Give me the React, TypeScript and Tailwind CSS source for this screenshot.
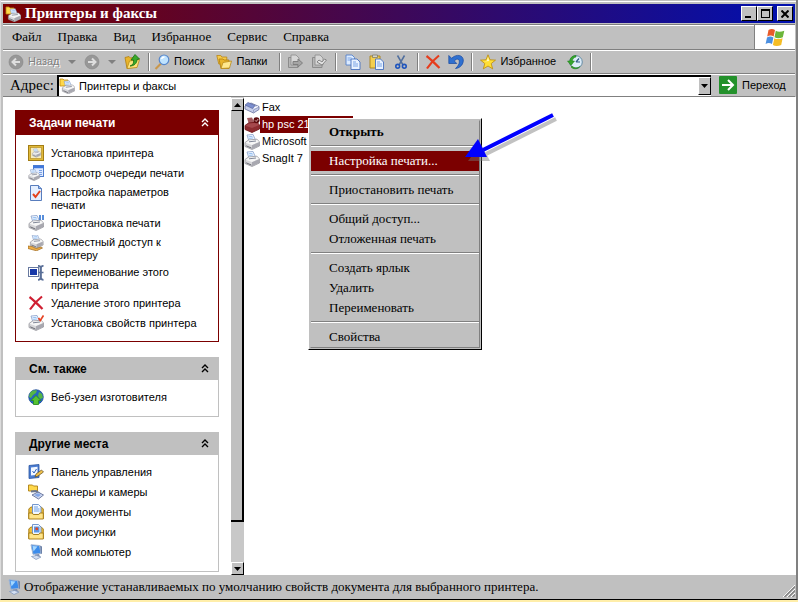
import React from 'react';

type IconProps = { className?: string };

const Svg = ({ children, className = '' }: { children: React.ReactNode; className?: string }) => (
  <svg viewBox="0 0 16 16" className={`h-4 w-4 shrink-0 ${className}`} aria-hidden="true">
    {children}
  </svg>
);

const PrinterShape = () => (
  <>
    <path d="M3 1l6-.6L11.500 6 5 7.500z" fill="#eef5ff" stroke="#7d97c4" strokeWidth=".7" />
    <path d="M4.500 2.800l4-.5M5.200 4.500l4-.6" stroke="#7fb2ee" strokeWidth=".8" />
    <path d="M1 8.500L4.500 6l8.500-.8L15.500 8v4L8 15.500 1 12.500z" fill="#d6d6d9" stroke="#8c8c93" strokeWidth=".7" />
    <path d="M1.500 8.700L5 6.500l8-.8 2 2.300-7 3z" fill="#f6f6f6" />
    <path d="M8 11.200l7-2.900V12l-7 3.200z" fill="#a8a8b0" />
    <path d="M2.200 11.800l5.300 2.300" stroke="#6a6b74" />
    <path d="M5 7.800l7-.8" stroke="#747a8c" strokeWidth=".9" />
  </>
);

const Printer = ({ className }: IconProps) => (
  <Svg className={className}>
    <PrinterShape />
  </Svg>
);

const PrinterFolder = ({ className }: IconProps) => (
  <Svg className={className}>
    <path d="M1 1h3l1 1h4v6H1z" fill="#ffd84a" stroke="#c08a10" strokeWidth=".8" />
    <g transform="translate(2.500 2.500) scale(.86)">
      <PrinterShape />
    </g>
  </Svg>
);

const PrinterSelected = () => (
  <Svg>
    <path d="M3 1l5-.6L10.500 6 5 7.500z" fill="#a35a5e" />
    <path d="M1 8.500L4.500 6l8.500-.8L15.500 8v4L8 15.500 1 12.500z" fill="#8d2c30" stroke="#6d1115" strokeWidth=".8" />
    <path d="M1.500 8.700L5 6.500l8-.8 2 2.300-7 3z" fill="#a5484c" />
    <circle cx="12.500" cy="3.300" r="3" fill="#5c0a0c" />
    <path d="M11 3.300l1.200 1.200 2-2.500" stroke="#d9b0b0" fill="none" />
  </Svg>
);

const Fax = () => (
  <Svg>
    <path d="M1 6l6-3 8 3.500v3L9.500 13 1 9z" fill="#c5cdea" stroke="#66709c" strokeWidth=".8" />
    <path d="M1 5l3-2.500 7 3-2.500 3z" fill="#7c8fd0" stroke="#4d5a94" strokeWidth=".6" />
    <path d="M10 8l4-1.500" stroke="#fff" />
    <path d="M9.500 12.500V10l5.500-3" stroke="#8a93b8" fill="none" strokeWidth=".7" />
  </Svg>
);

const AddPrinter = () => (
  <Svg>
    <rect x=".5" y=".5" width="15" height="15" fill="#e0b93a" stroke="#a37d14" />
    <rect x="2.500" y="2.500" width="11" height="11" fill="#f6ecc0" stroke="#b8922a" strokeWidth=".7" />
    <g transform="translate(3.800 3.500) scale(.56)">
      <PrinterShape />
    </g>
  </Svg>
);

const Queue = () => (
  <Svg>
    <rect x="5.500" y=".5" width="10" height="11" fill="#dfeaff" stroke="#4d7ccd" />
    <path d="M5 2h11" stroke="#4078dc" strokeWidth="2.500" />
    <path d="M11 5.500h3M11 7.500h3M11 9.500h3" stroke="#7aa1e4" />
    <g transform="translate(0 4) scale(.75)">
      <PrinterShape />
    </g>
  </Svg>
);

const Preferences = () => (
  <Svg>
    <path d="M2.500.500h8l3 3v12h-11z" fill="#e4efff" stroke="#587dbd" />
    <path d="M10.500.500v3h3" fill="#9cbdf0" stroke="#587dbd" />
    <path d="M5 9l2.500 3 4.500-6" fill="none" stroke="#e3421c" strokeWidth="2" />
  </Svg>
);

const PausePrinter = () => (
  <Svg>
    <PrinterShape />
    <path d="M12 0v5M15 0v5" stroke="#2e72d2" strokeWidth="1.600" />
  </Svg>
);

const SharePrinter = () => (
  <Svg>
    <g transform="translate(1.500 -.5) scale(.88)">
      <PrinterShape />
    </g>
    <path d="M0 11l4 .5 4 2 5-1.500 1.500 1-6 2.800L0 13.500z" fill="#eeae48" stroke="#9c651a" strokeWidth=".7" />
  </Svg>
);

const Rename = () => (
  <Svg>
    <rect x=".5" y="2.500" width="10" height="9" fill="#fff" stroke="#68799f" />
    <rect x="2" y="4" width="7" height="6" fill="#1738a8" />
    <path d="M10 .8c2 0 2.500.5 2.500 2v10c0 1.500-.5 2-2.500 2M15.500 .8c-2 0-2.500.5-2.500 2v10c0 1.500.5 2 2.500 2M10.500 7.500h5" fill="none" stroke="#5a6f98" strokeWidth="1.700" />
  </Svg>
);

const Delete = ({ color = '#cf1f32' }: { color?: string }) => (
  <Svg>
    <path d="M1.500 2c4 3 9 8 13 12M14 1.500C9.500 5 5 10 2 14.500" fill="none" stroke={color} strokeWidth="2.200" />
  </Svg>
);

const PrinterProps = () => (
  <Svg>
    <PrinterShape />
    <path d="M10.500 3l1.800 2.500L15.500.500" fill="none" stroke="#e64525" strokeWidth="1.700" />
  </Svg>
);

const Globe = () => (
  <Svg>
    <circle cx="8" cy="8" r="7.300" fill="#2366c4" stroke="#194690" strokeWidth=".7" />
    <path d="M2 4c2-3 5-3 7-2.500L8 4 5 6l-2 3-2-1zM11 3l3 2 1 4-3 1-2-3z" fill="#56b746" />
    <path d="M8 6.500l5 5h-2.500v4h-5v-4H3z" fill="#55c332" stroke="#2b8a1c" strokeWidth=".8" />
  </Svg>
);

const ControlPanel = () => (
  <Svg>
    <path d="M1 1.500l10-1v13l-10 1z" fill="#4b7dd2" stroke="#28549f" strokeWidth=".8" />
    <path d="M3 3.500l6.500-.7v8L3 11.500z" fill="#f3f8ff" />
    <path d="M4.500 7l1.500 2 2.500-4" fill="none" stroke="#2c61bb" />
    <path d="M7 13l1-3 5.500-4 2 2-5.500 4z" fill="#f0c24b" stroke="#5f4a20" strokeWidth=".7" />
  </Svg>
);

const Scanner = () => (
  <Svg>
    <path d="M.500 1h4l1 1h4v5h-9z" fill="#ffd84a" stroke="#ad7f13" strokeWidth=".9" />
    <path d="M3 7.500l5-.5 4 3" stroke="#6a7690" strokeWidth="1.800" fill="none" />
    <path d="M4 11l6-3 5.500 3-5 4z" fill="#d2daf0" stroke="#50618e" strokeWidth=".8" />
    <path d="M6 11l4-1.800 3 1.800-3 2z" fill="#84a8e8" />
  </Svg>
);

const Documents = ({ picture = false }: { picture?: boolean }) => (
  <Svg>
    <path d="M.800 5l2-2h10.500l2 2v9.500H.800z" fill="#efbe3d" stroke="#a37710" strokeWidth=".9" />
    <path d="M4.500.500h6l2.500 2.500v8h-8.500z" fill="#f2f8ff" stroke="#648cc9" strokeWidth=".9" />
    {picture ? (
      <>
        <rect x="6" y="2.500" width="5.500" height="6" fill="#5b97e7" />
        <circle cx="8.800" cy="4.800" r="1.500" fill="#d94a2c" />
      </>
    ) : (
      <path d="M6 3h4M6 5h5.500M6 7h5.500" stroke="#6ea0e6" />
    )}
    <path d="M.800 9h3.500l1 1.500h5.500l1-1.500h3.500v6H.800z" fill="#ffe488" stroke="#a37710" strokeWidth=".9" />
  </Svg>
);

const Computer = ({ className }: IconProps) => (
  <Svg className={className}>
    <path d="M3 .8l8.500.7 1.500 8-8 .8z" fill="#3b8cec" stroke="#a0b4d2" strokeWidth="1" />
    <path d="M4.500 2l5 .4-4 5z" fill="#a5d8ff" />
    <path d="M12 1.500l2 1v7l-1 .5z" fill="#6d82a8" />
    <path d="M7 10.500l4-.5 1 2.500-4 1z" fill="#8290ad" />
    <path d="M3.500 12.500l5-1 4.500 1.500-5 2.500z" fill="#d5e0f3" stroke="#7890b8" strokeWidth=".7" />
  </Svg>
);

const Nav = ({ forward = false }: { forward?: boolean }) => (
  <Svg>
    <circle cx="8" cy="8" r="7" fill="#979797" stroke="#858585" strokeWidth=".6" />
    <path d={forward ? 'M4 8h7M8 4.500L11.500 8 8 11.500' : 'M12 8H5M8 4.500L4.500 8 8 11.500'} fill="none" stroke="#dedede" strokeWidth="2" />
  </Svg>
);

const FolderUp = () => (
  <Svg>
    <path d="M1 3.500l4-1 1.500 1.500 6-1v10L3 14.500z" fill="#e9b52c" stroke="#b07d0c" strokeWidth=".8" />
    <path d="M3 14.500L5.500 7l10-1.500-2.500 8z" fill="#ffe47a" stroke="#b98a19" strokeWidth=".8" />
    <path d="M6 12c3-1 4-3 3.500-6H7l4-5.500L15.500 5 13 5.500c0 4-3 6.500-7 6.500z" fill="#39a92c" stroke="#167010" strokeWidth=".8" />
  </Svg>
);

const Folders = () => (
  <Svg>
    <path d="M.800 1.500h4l1 1.500h5v7h-8z" fill="#f5c94a" stroke="#b98715" strokeWidth=".8" />
    <path d="M3 5h4l1 1h5v8.500H5z" fill="#e9b52c" stroke="#b07d0c" strokeWidth=".8" />
    <path d="M5 14.500L7 8.500l8.500-1.500-2 7z" fill="#ffe98e" stroke="#b98a19" strokeWidth=".8" />
  </Svg>
);

const Search = () => (
  <Svg>
    <path d="M7 9.500L1.500 15" stroke="#c9974c" strokeWidth="2.200" />
    <circle cx="10" cy="5.800" r="4.800" fill="#bfe3ff" stroke="#5787cb" strokeWidth="1.200" />
    <path d="M7.500 5c.5-1.500 1.500-2 3-2" stroke="#fff" strokeWidth="1.300" fill="none" />
  </Svg>
);

const MoveTo = ({ copy = false }: { copy?: boolean }) => (
  <Svg>
    <path d="M1.500 13.500v-10h4l1.500 2h4v8z" fill="#b5b5b5" stroke="#8c8c8c" />
    <path d="M4 1h5l3 3v7H4z" fill="#d6d6d6" stroke="#8c8c8c" strokeWidth=".8" />
    {copy ? (
      <path d="M6 8l5 3 4.500-5-2-1-2.500 3-3-2z" fill="#e5e5e5" stroke="#858585" />
    ) : (
      <path d="M6 7.500h5V5l4.500 4-4.500 4v-2.500H6z" fill="#a5a5a5" stroke="#7f7f7f" />
    )}
  </Svg>
);

const Copy = () => (
  <Svg>
    <path d="M1 1h6l2.500 2.500V11H1z" fill="#dcebff" stroke="#5682cb" strokeWidth=".9" />
    <path d="M2.500 4h4M2.500 6h4" stroke="#7ba4e5" />
    <path d="M6 5h6l3 3v7.500H6z" fill="#e8f2ff" stroke="#4772be" strokeWidth=".9" />
    <path d="M8 8h3M8 10h5M8 12h5" stroke="#7ba4e5" />
  </Svg>
);

const Paste = () => (
  <Svg>
    <path d="M1 2h10v12H1z" fill="#f3cf50" stroke="#a9821a" strokeWidth=".9" />
    <path d="M3.500 1h5v2.500h-5z" fill="#d3d3cc" stroke="#77745d" strokeWidth=".7" />
    <path d="M6.500 5h5l3 3v7.500h-8z" fill="#e8f2ff" stroke="#4772be" strokeWidth=".9" />
    <path d="M8 8h3M8 10h5M8 12h5" stroke="#7ba4e5" />
  </Svg>
);

const Cut = () => (
  <Svg>
    <path d="M4.500 1.500L10 11M11.500 1.500L6 11" stroke="#516f9e" strokeWidth="1.500" />
    <circle cx="4.700" cy="12.300" r="1.900" fill="none" stroke="#1f55bd" strokeWidth="1.600" />
    <circle cx="11.300" cy="12.300" r="1.900" fill="none" stroke="#1f55bd" strokeWidth="1.600" />
  </Svg>
);

const Undo = () => (
  <Svg>
    <path d="M.800 1.500v8h8L6.300 7C8 4.500 11 4.500 11.300 7c.4 3-1.300 5-3.800 7.500 5-.5 8-4.500 7.800-8.500C15 1 8.500-.5 3.600 4.300z" fill="#2f70d0" stroke="#17489e" strokeWidth=".7" />
  </Svg>
);

const Star = () => (
  <Svg>
    <path d="M8 .8l2 5 5.500.3-4.300 3.500 1.500 5.300L8 12l-4.700 2.900 1.500-5.300L.500 6.100 6 5.800z" fill="#ffdf35" stroke="#bb8a0c" strokeWidth=".8" />
    <path d="M8 3l1 4-5 .5 3-.7z" fill="#fffbd0" />
  </Svg>
);

const History = () => (
  <Svg>
    <circle cx="9" cy="8" r="6.300" fill="#dcecf8" stroke="#648ba4" />
    <path d="M9 8l3-3.500M9 8h4" stroke="#315c86" strokeWidth="1.200" />
    <path d="M9 1.500C5 1.500 3 4 2.800 7H.500L4 11.500 7.500 7H5.300c.2-2 1.500-3.500 3.700-4zM5 12c2 2 5 2.500 8 .5-2 3-7 3-9 .5z" fill="#35a52c" stroke="#187815" strokeWidth=".5" />
  </Svg>
);

const WindowsFlag = () => (
  <svg viewBox="0 0 20 19" className="h-[19px] w-5" aria-hidden="true">
    <path d="M3.500 2c2-1.500 4.500-1.500 6.500 0L8.700 8.500c-2-1.400-4.400-1.300-6.500 0z" fill="#e85b2a" />
    <path d="M10.800 2.700c2 1.300 5 1.300 8.500 0l-1.500 6.500c-3 1.300-6.200 1.200-8.300 0z" fill="#6cb63a" />
    <path d="M2 9.500c2-1.400 4.400-1.400 6.400 0L7 16c-2-1.400-4.400-1.400-6.400 0z" fill="#4b8fe0" />
    <path d="M9.300 10.200c2 1.200 5.200 1.200 8.300 0L16.200 17c-3 1.200-6.200 1.200-8.300 0z" fill="#f5bd25" />
  </svg>
);

const Chevrons = () => (
  <svg viewBox="0 0 8 9" className="h-[9px] w-2" fill="none" stroke="currentColor" strokeWidth="1.400" aria-hidden="true">
    <path d="M1 4l3-3 3 3M1 8l3-3 3 3" />
  </svg>
);

const Caret = ({ className = 'w-2' }: IconProps) => (
  <svg viewBox="0 0 8 4" preserveAspectRatio="none" className={`h-1 ${className}`} fill="currentColor" aria-hidden="true">
    <path d="M0 0h8L4 4z" />
  </svg>
);

const raised = 'border border-t-white border-l-white border-r-black border-b-black bg-[#c0c0c0]';
const bar = 'border-t border-[#808080] shadow-[inset_0_1px_0_#fff]';

const Separator = () => <div className="h-[18px] w-0.5 shrink-0 border-l border-[#808080] bg-white" />;

const Tool = ({ label, text, children }: { label?: string; text?: string; children: React.ReactNode }) => (
  <button type="button" aria-label={label} className="flex items-center gap-1 whitespace-nowrap">
    {children}
    {text && <span>{text}</span>}
  </button>
);

type Task = { icon: React.ReactNode; text: string };

const printTasks: Task[] = [
  { icon: <AddPrinter />, text: 'Установка принтера' },
  { icon: <Queue />, text: 'Просмотр очереди печати' },
  { icon: <Preferences />, text: 'Настройка параметров печати' },
  { icon: <PausePrinter />, text: 'Приостановка печати' },
  { icon: <SharePrinter />, text: 'Совместный доступ к принтеру' },
  { icon: <Rename />, text: 'Переименование этого принтера' },
  { icon: <Delete />, text: 'Удаление этого принтера' },
  { icon: <PrinterProps />, text: 'Установка свойств принтера' },
];

const places: Task[] = [
  { icon: <ControlPanel />, text: 'Панель управления' },
  { icon: <Scanner />, text: 'Сканеры и камеры' },
  { icon: <Documents />, text: 'Мои документы' },
  { icon: <Documents picture />, text: 'Мои рисунки' },
  { icon: <Computer />, text: 'Мой компьютер' },
];

function Panel({ title, tasks, primary = false }: { title: string; tasks: Task[]; primary?: boolean }) {
  return (
    <section>
      <h2>
        <button
          type="button"
          className={`flex w-full items-center justify-between pr-2.5 pl-3.5 text-[12px] font-bold ${
            primary ? 'h-[25px] bg-[#7b0000] text-white' : 'h-[23px] bg-[#c0c0c0] text-black'
          }`}
        >
          {title}
          <Chevrons />
        </button>
      </h2>
      <ul
        className={`flex flex-col gap-1 border border-t-0 pr-2 pl-3 ${
          primary ? 'border-[#7b0000] py-2.5' : 'border-[#c0c0c0] pt-[9px] pb-[11px]'
        }`}
      >
        {tasks.map((t) => (
          <li key={t.text}>
            <a href="#" className="flex min-h-4 items-start gap-[7px]">
              {t.icon}
              <span className={t.text.length > 26 ? '-mb-px w-[130px] pt-px leading-[13px]' : 'leading-4 whitespace-nowrap'}>{t.text}</span>
            </a>
          </li>
        ))}
      </ul>
    </section>
  );
}

const menuGroups = [
  ['Открыть'],
  ['Настройка печати...'],
  ['Приостановить печать'],
  ['Общий доступ...', 'Отложенная печать'],
  ['Создать ярлык', 'Удалить', 'Переименовать'],
  ['Свойства'],
];

function ContextMenu() {
  return (
    <div role="menu" className={`absolute top-[21px] left-[305px] w-[174px] p-px ${raised} font-['Liberation_Serif',serif] text-[13px]`}>
      <div className="border border-[#c0c0c0] border-r-[#808080] border-b-[#808080] pt-px">
        {menuGroups.map((group, i) => (
          <div key={group[0]}>
            {i > 0 && <div role="separator" className="my-[3px] h-[3px] border-t border-[#808080] bg-white bg-clip-content pb-px" />}
            {group.map((item) => (
              <button
                key={item}
                type="button"
                role="menuitem"
                className={`block h-5 w-full pl-[18px] text-left leading-5 whitespace-nowrap ${
                  i === 0 ? 'font-bold' : ''
                } ${i === 1 ? 'bg-[#7b0000] text-white' : ''}`}
              >
                {item}
              </button>
            ))}
          </div>
        ))}
      </div>
    </div>
  );
}

const files = [
  { icon: <Fax />, name: 'Fax' },
  { icon: <PrinterSelected />, name: 'hp psc 21', selected: true },
  { icon: <Printer />, name: 'Microsoft' },
  { icon: <Printer />, name: 'SnagIt 7' },
];

export default function App() {
  return (
    <div className="flex min-h-screen flex-col bg-[#ffeeaa] pb-0.5 font-['Liberation_Sans',sans-serif] text-[11px] text-black">
      <div className="flex grow flex-col border-r-2 border-b border-l border-r-[#808080] border-b-black border-l-[#dcdcdc] bg-[#c0c0c0] pt-1 pr-px pl-0.5 shadow-[inset_0_1px_0_#c0c0c0,inset_0_2px_0_#fff]">
        <header className="mb-px flex h-[19px] items-center bg-linear-to-r/srgb from-[#7b0000] to-[#0010b0] px-0.5">
          <PrinterFolder />
          <h1 className="grow pl-1 font-['Liberation_Serif',serif] text-[15px] leading-[19px] font-bold text-white">Принтеры и факсы</h1>
          <button type="button" aria-label="Свернуть" className={`flex h-[15px] w-4 items-end pb-0.5 pl-[3px] ${raised}`}>
            <span className="h-0.5 w-1.5 bg-black" />
          </button>
          <button type="button" aria-label="Развернуть" className={`flex h-[15px] w-4 items-center justify-center ${raised}`}>
            <span className="h-[9px] w-[9px] border border-t-2 border-black" />
          </button>
          <button type="button" aria-label="Закрыть" className={`ml-1 flex h-[15px] w-4 items-center justify-center ${raised}`}>
            <svg viewBox="0 0 8 8" className="h-2 w-2" stroke="#000" strokeWidth="2" aria-hidden="true">
              <path d="M.500.500l7 7M7.500.500l-7 7" />
            </svg>
          </button>
        </header>

        <nav className={`flex h-[25px] ${bar} pl-[9px] font-['Liberation_Serif',serif] text-[13px]`}>
          <div className="flex grow items-center gap-4">
            {['Файл', 'Правка', 'Вид', 'Избранное', 'Сервис', 'Справка'].map((m) => (
              <button key={m} type="button">
                {m}
              </button>
            ))}
          </div>
          <div className="flex w-[41px] items-center justify-center border-l border-[#808080] bg-white">
            <WindowsFlag />
          </div>
        </nav>

        <div role="toolbar" className={`flex h-6 items-center ${bar} pl-[5px]`}>
          <button type="button" disabled className="flex items-center gap-1 text-[#808080] [text-shadow:1px_1px_0_#fff]">
            <Nav />
            <span className="w-9 text-left">Назад</span>
          </button>
          <Caret className="ml-1 w-2 text-[#808080]" />
          <div className="ml-2 flex items-center gap-2">
            <Tool label="Вперед">
              <Nav forward />
            </Tool>
            <Caret className="w-2 text-[#808080]" />
            <Tool label="Вверх">
              <FolderUp />
            </Tool>
            <Separator />
          </div>
          <div className="ml-1 flex items-center gap-3">
            <Tool text="Поиск">
              <Search />
            </Tool>
            <Tool text="Папки">
              <Folders />
            </Tool>
            <Separator />
          </div>
          <div className="ml-1.5 flex items-center gap-2">
            <Tool label="Переместить">
              <MoveTo />
            </Tool>
            <Tool label="Копировать в">
              <MoveTo copy />
            </Tool>
            <Separator />
            <Tool label="Копировать">
              <Copy />
            </Tool>
            <Tool label="Вставить">
              <Paste />
            </Tool>
            <Tool label="Вырезать">
              <Cut />
            </Tool>
            <Separator />
          </div>
          <div className="ml-1.5 flex items-center gap-[7px]">
            <Tool label="Удалить">
              <Delete color="#e63c1c" />
            </Tool>
            <Tool label="Отменить">
              <Undo />
            </Tool>
            <Separator />
            <Tool text="Избранное">
              <Star />
            </Tool>
            <div className="pl-1">
              <Tool label="Журнал">
                <History />
              </Tool>
            </div>
            <Separator />
          </div>
        </div>

        <div className={`flex h-6 items-center border-b ${bar} pl-[7px]`}>
          <label htmlFor="address" className="w-[47px] shrink-0 font-['Liberation_Serif',serif] text-[15px] leading-5">
            Адрес:
          </label>
          <div className="flex h-[21px] grow items-center border-t-2 border-l-2 border-black bg-white">
            <PrinterFolder />
            <input id="address" defaultValue="Принтеры и факсы" className="min-w-0 grow bg-transparent pl-1 outline-none" />
            <button type="button" aria-label="Список адресов" className={`flex h-[18px] w-[13px] items-center justify-center ${raised}`}>
              <Caret className="w-[7px]" />
            </button>
          </div>
          <button type="button" className="ml-2 flex w-[76px] items-center gap-[5px]">
            <svg viewBox="0 0 18 18" className="h-[18px] w-[18px] shrink-0" aria-hidden="true">
              <rect width="18" height="18" rx="1" fill="#23912b" />
              <path d="M3 9h10M9 4l5 5-5 5" fill="none" stroke="#fff" strokeWidth="2" />
            </svg>
            Переход
          </button>
        </div>

        <main className="relative -mr-px -ml-0.5 flex grow border-l-2 border-[#c0c0c0] bg-white">
          <aside className="flex w-[228px] shrink-0 flex-col gap-[15px] px-3 pt-[13px] pb-[3px]">
            <Panel title="Задачи печати" tasks={printTasks} primary />
            <Panel title="См. также" tasks={[{ icon: <Globe />, text: 'Веб-узел изготовителя' }]} />
            <Panel title="Другие места" tasks={places} />
          </aside>
          <div className="flex w-[13px] shrink-0 flex-col bg-[#d0d0d0] pt-px" aria-hidden="true">
            <div className={`flex h-[13px] items-center justify-center ${raised}`}>
              <Caret className="w-[7px] rotate-180" />
            </div>
            <div className="grow-[409] border-r-2 border-b-2 border-black bg-[#c0c0c0]" />
            <div className="grow-[40] bg-[#c8c8c8]" />
            <div className={`flex h-[13px] items-center justify-center ${raised}`}>
              <Caret className="w-[7px]" />
            </div>
          </div>
          <ul className="pt-0.5">
            {files.map((f) => (
              <li key={f.name} className="flex h-[17px] items-center">
                {f.icon}
                <span className={`pl-0.5 leading-[17px] whitespace-nowrap ${f.selected ? 'w-[93px] bg-[#7b0000] text-white' : ''}`}>
                  {f.name}
                </span>
              </li>
            ))}
          </ul>
          <ContextMenu />
          <svg viewBox="0 0 100 60" className="absolute top-[11px] left-[458px] h-[60px] w-[100px]" aria-hidden="true">
            <g transform="translate(3 4)" fill="#777" stroke="#777" opacity=".45">
              <path d="M92 7L22 42" strokeWidth="4" />
              <path d="M4 49L17 32l9 17z" stroke="none" />
            </g>
            <path d="M92 7L22 42" stroke="#0000ff" strokeWidth="4" />
            <path d="M4 49L17 31l9 18z" fill="#0000ff" />
          </svg>
        </main>

        <footer className="flex h-6 items-center gap-0.5 pl-[3px] font-['Liberation_Serif',serif] text-[13px]">
          <Computer />
          <p className="grow whitespace-nowrap">Отображение устанавливаемых по умолчанию свойств документа для выбранного принтера.</p>
          <svg viewBox="0 0 12 12" className="mb-0.5 h-3 w-3 self-end" aria-hidden="true">
            <path d="M0 12L12 0M4 12l8-8M8 12l4-4" stroke="#fff" />
            <path d="M1.500 12L12 1.500M5.500 12L12 5.500M9.500 12L12 9.500" stroke="#808080" strokeWidth="1.300" />
          </svg>
        </footer>
      </div>
    </div>
  );
}
